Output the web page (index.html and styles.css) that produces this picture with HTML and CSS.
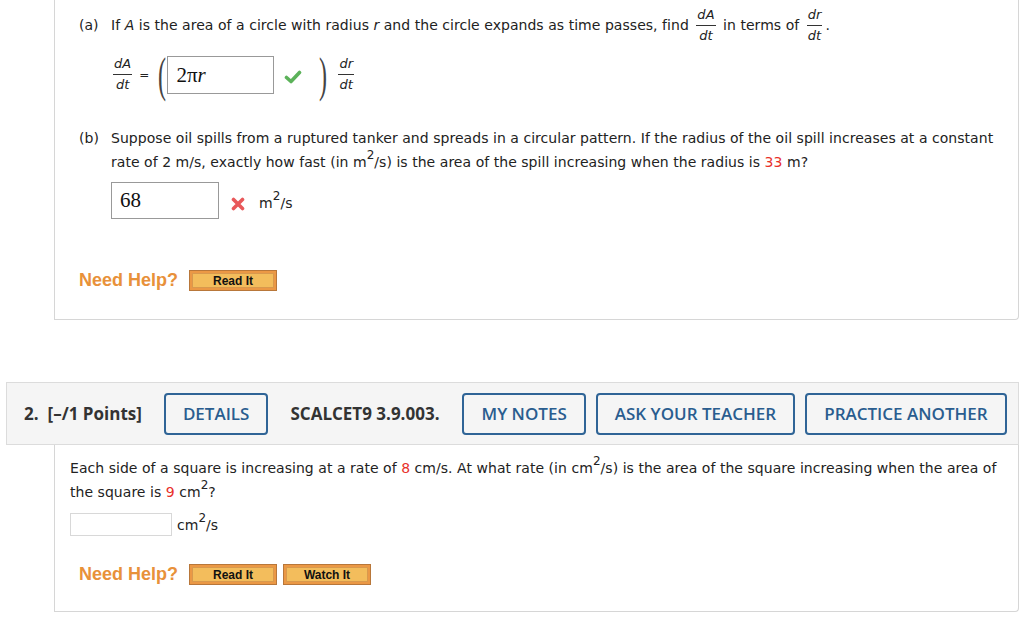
FILE: index.html
```html
<!DOCTYPE html>
<html>
    <head>
        <link rel="stylesheet" href="styles.css">
    </head>
    <body>
        <div class="panel panel-top">
            <div class="q-line q-line-a">
                <span class="label">(a)</span>
                <span>If <i>A</i> is the area of a circle with radius <i>r</i> and the circle expands as time passes, find <span class="frac"><span class="num">dA</span><span class="den">dt</span></span> in terms of <span class="frac"><span class="num">dr</span><span class="den">dt</span></span>.</span>
            </div>
            <div class="formula">
                <span class="frac"><span class="num">dA</span><span class="den">dt</span></span>
                <span class="equals">=</span>
                <span class="paren">(</span>
                <div class="answer answer-math">2&pi;<i>r</i></div>
                <svg class="mark" width="18" height="14" viewBox="0 0 18 14">
                    <polyline points="2.5,7.5 7,11.5 15.5,2.5" fill="none" stroke="#5cb25a" stroke-width="3.6" stroke-linecap="round" stroke-linejoin="round"/>
                </svg>
                <span class="paren paren-close">)</span>
                <span class="frac"><span class="num">dr</span><span class="den">dt</span></span>
            </div>
            <div class="q-line q-line-b">
                <span class="label">(b)</span>
                <div class="q-text">
                    <div class="row">Suppose oil spills from a ruptured tanker and spreads in a circular pattern. If the radius of the oil spill increases at a constant</div>
                    <div class="row">rate of 2 m/s, exactly how fast (in m<sup>2</sup>/s) is the area of the spill increasing when the radius is <span class="given">33</span> m?</div>
                </div>
            </div>
            <div class="answer-row">
                <div class="answer answer-num">68</div>
                <svg class="mark cross" width="14" height="14" viewBox="0 0 14 14">
                    <path d="M2.5 2.5 L11.5 11.5 M11.5 2.5 L2.5 11.5" stroke="#e8585a" stroke-width="3.6" stroke-linecap="round"/>
                </svg>
                <span class="unit">m<sup>2</sup>/s</span>
            </div>
            <div class="help">
                <span class="help-title">Need Help?</span>
                <button class="help-btn">Read It</button>
            </div>
        </div>

        <div class="q-header">
            <span class="q-num">2.</span>
            <span class="q-points">[&ndash;/1 Points]</span>
            <button class="tool-btn">DETAILS</button>
            <span class="q-ref">SCALCET9 3.9.003.</span>
            <button class="tool-btn">MY NOTES</button>
            <button class="tool-btn">ASK YOUR TEACHER</button>
            <button class="tool-btn tool-last">PRACTICE ANOTHER</button>
        </div>
        <div class="panel panel-bottom">
            <div class="q-text q-text-2">
                <div class="row">Each side of a square is increasing at a rate of <span class="given">8</span> cm/s. At what rate (in cm<sup>2</sup>/s) is the area of the square increasing when the area of</div>
                <div class="row">the square is <span class="given">9</span> cm<sup>2</sup>?</div>
            </div>
            <div class="answer-row answer-row-2">
                <div class="blank"></div>
                <span class="unit">cm<sup>2</sup>/s</span>
            </div>
            <div class="help help-2">
                <span class="help-title">Need Help?</span>
                <button class="help-btn">Read It</button>
                <button class="help-btn">Watch It</button>
            </div>
        </div>
    </body>
</html>
```

FILE: styles.css
```css
*, *:after, *:before {
    box-sizing: border-box;
    margin: 0;
    padding: 0;
}
body {
    width: 1024px;
    background: #FFF;
    color: #222;
    font-family: "DejaVu Sans", Verdana, sans-serif;
    font-size: 14px;
    letter-spacing: 0.04px;
}
sup {
    font-size: 12px;
    line-height: 0;
    vertical-align: 8px;
}
.panel {
    margin-left: 54px;
    width: 965px;
    border: 1px solid #d6d6d6;
    border-top: none;
    border-radius: 0 0 4px 0;
}
.panel-top {
    padding: 6px 24px 28px;
}
.q-line {
    display: flex;
    align-items: center;
}
.q-line-a {
    height: 38px;
    white-space: nowrap;
}
.label {
    width: 32px;
    flex: none;
    line-height: 24px;
}
.q-line-b {
    margin-top: 31px;
    align-items: flex-start;
}
.row {
    height: 24px;
    line-height: 24px;
    white-space: nowrap;
}
.frac {
    display: inline-flex;
    flex-direction: column;
    align-items: center;
    vertical-align: middle;
    font-style: italic;
    font-size: 13px;
    line-height: 14px;
    padding: 0 1px;
    margin: 0 2px;
}
.frac .num {
    border-bottom: 1px solid #333;
    padding: 0 1px 3px;
    width: 100%;
    text-align: center;
}
.frac .den {
    padding-top: 3px;
}
.formula {
    display: flex;
    align-items: center;
    height: 41px;
    margin: 10px 0 0 31px;
}
.equals {
    margin: 0 5px 0 4px;
    font-size: 12px;
}
.paren {
    font-family: "Liberation Serif", serif;
    font-size: 48px;
    line-height: 41px;
    transform: scaleX(0.5);
    color: #444;
    margin-right: -3px;
}
.paren-close {
    margin: 0 4px 0 13px;
}
.answer {
    border: 1px solid #999;
    font-family: "Liberation Serif", serif;
    font-size: 21px;
    background: #FFF;
    color: #111;
}
.answer-math {
    width: 107px;
    height: 38px;
    line-height: 36px;
    padding-left: 8px;
}
.mark {
    margin-left: 10px;
    margin-top: 5px;
}
.answer-row {
    display: flex;
    align-items: center;
    margin: 8px 0 0 32px;
    height: 37px;
}
.answer-num {
    width: 108px;
    height: 37px;
    line-height: 35px;
    padding-left: 8px;
}
.cross {
    margin: 6px 0 0 12px;
}
.unit {
    margin-left: 14px;
    margin-top: 4px;
}
.given {
    color: #e8302a;
}
.help {
    display: flex;
    align-items: center;
    margin-top: 51px;
    height: 21px;
}
.help-title {
    font-family: "Liberation Sans", Arial, sans-serif;
    font-weight: bold;
    font-size: 18px;
    letter-spacing: 0;
    color: #e8913a;
    width: 110px;
}
.help-btn {
    width: 88px;
    height: 21px;
    margin-right: 6px;
    border: 1px solid #b8773a;
    background: #f3bd5c;
    box-shadow: inset 0 0 0 2px #eb9845, inset 0 0 0 3px #d9994d;
    font-family: "Liberation Sans", Arial, sans-serif;
    font-weight: bold;
    font-size: 12px;
    color: #111;
}
.q-header {
    display: flex;
    align-items: center;
    margin: 62px 0 0 6px;
    width: 1013px;
    height: 63px;
    padding: 0 0 0 17px;
    background: #F5F5F5;
    border: 1px solid #dcdcdc;
    font-family: "Open Sans", sans-serif;
    font-size: 17px;
    font-weight: bold;
    letter-spacing: 0;
    color: #333;
}
.q-num {
    margin-right: 9px;
}
.q-points {
    margin-right: 22px;
}
.q-ref {
    margin-right: 23px;
}
.tool-btn {
    height: 42px;
    margin-right: 22px;
    padding: 0 17px;
    border: 2px solid #2f6496;
    border-radius: 4px;
    background: transparent;
    font-family: "Open Sans", sans-serif;
    font-size: 17px;
    font-weight: 600;
    color: #2a5d8f;
}
.tool-btn + .tool-btn {
    margin-left: -12px;
}
.tool-last {
    margin-right: 0;
}
.panel-bottom {
    padding: 11px 15px 26px;
}
.answer-row-2 {
    margin: 9px 0 0 0;
    height: 23px;
}
.blank {
    width: 102px;
    height: 23px;
    border: 1px solid #d8d8d8;
}
.answer-row-2 .unit {
    margin-left: 5px;
    margin-top: 0;
}
.help-2 {
    margin: 28px 0 0 9px;
}
```
